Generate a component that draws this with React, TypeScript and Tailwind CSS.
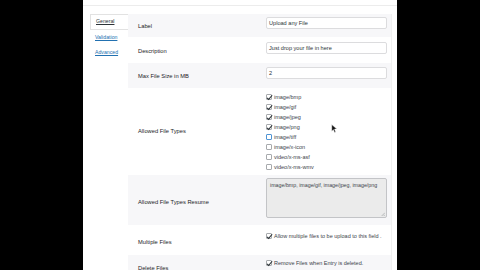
import React from 'react';

const Check = ({ checked, focus }: { checked?: boolean; focus?: boolean }) => (
  <span
    className={`flex h-[6px] w-[6px] shrink-0 items-center justify-center rounded-[1px] border bg-white ${
      focus ? 'border-[#4f94d4]' : 'border-[#a7aaad]'
    }`}
  >
    {checked && (
      <svg viewBox="0 0 10 10" className="h-[7px] w-[7px] overflow-visible">
        <path d="M1.5 5.5l2.3 2.3L8.8 1.8" fill="none" stroke="#2c3338" strokeWidth="1.5" />
      </svg>
    )}
  </span>
);

const Field = ({ value }: { value: string }) => (
  <div className="flex h-[12px] w-[121px] items-center rounded-[2px] border border-[#dcdcde] bg-white px-[2px] text-[5.6px] text-[#2c3338]">
    {value}
  </div>
);

const types: [string, boolean, boolean?][] = [
  ['image/bmp', true],
  ['image/gif', true],
  ['image/jpeg', true],
  ['image/png', true],
  ['image/tiff', false, true],
  ['image/x-icon', false],
  ['video/x-ms-asf', false],
  ['video/x-ms-wmv', false],
];

export default function App() {
  return (
    <div
      className="relative flex h-[270px] w-[480px] overflow-hidden bg-black text-[#1d2327]"
      style={{ fontFamily: '"Liberation Sans", Arial, sans-serif' }}
    >
      <div className="w-[83px] shrink-0 bg-black" />

      <div className="flex w-[314px] shrink-0 flex-col bg-white">
        <div className="h-[6px] shrink-0 border-b border-[#ececec]" />

        <div className="flex flex-1 pt-[8px]">
          {/* tabs */}
          <div className="flex w-[45px] shrink-0 flex-col pl-[7px] text-[5.2px]">
            <div className="flex h-[16px] items-center border-y border-l border-[#e2e2e2] bg-white pl-[5px] text-[#2c3338] underline">
              General
            </div>
            <div className="flex h-[15px] items-center pl-[5px] pt-[1px] text-[#2271b1] underline">Validation</div>
            <div className="flex h-[15px] items-center pl-[5px] text-[#2271b1] underline">Advanced</div>
          </div>

          {/* settings table */}
          <div className="flex w-[264px] shrink-0 flex-col border-r border-[#f0f0f0] text-[5.75px] font-medium">
            <div className="flex h-[23px] bg-[#f7f7f9]">
              <div className="flex w-[138px] items-center pl-[10px] pt-[1px]">Label</div>
              <div className="pt-[3px]">
                <Field value="Upload any File" />
              </div>
            </div>

            <div className="flex h-[26px] bg-white">
              <div className="flex w-[138px] items-center pl-[10px] pt-[2px]">Description</div>
              <div className="pt-[5px]">
                <Field value="Just drop your file in here" />
              </div>
            </div>

            <div className="flex h-[25px] bg-[#f7f7f9]">
              <div className="flex w-[138px] items-center pl-[10px] pt-[2px]">Max File Size in MB</div>
              <div className="pt-[4px]">
                <Field value="2" />
              </div>
            </div>

            <div className="flex h-[87px] bg-white">
              <div className="flex w-[138px] items-center pl-[10px]">Allowed File Types</div>
              <div className="flex flex-col pt-[4px] font-normal">
                {types.map(([t, c, f]) => (
                  <div key={t} className="flex h-[10px] items-center gap-[2px] text-[5.5px] text-[#3c434a]">
                    <Check checked={c} focus={f} />
                    <span>{t}</span>
                  </div>
                ))}
              </div>
            </div>

            <div className="flex h-[50px] bg-[#f7f7f9]">
              <div className="flex w-[138px] items-center pl-[10px] pt-[4px]">Allowed File Types Resume</div>
              <div className="pt-[3px]">
                <div className="relative h-[40px] w-[121px] rounded-[2px] border border-[#c3c4c7] bg-[#ebebeb] px-[3px] pt-[3px] text-[5.3px] font-normal text-[#3c434a]">
                  image/bmp, image/gif, image/jpeg, image/png
                  <svg viewBox="0 0 6 6" className="absolute bottom-[1px] right-[1px] h-[4px] w-[4px]">
                    <path d="M6 1L1 6M6 4L4 6" stroke="#8c8f94" strokeWidth="0.8" />
                  </svg>
                </div>
              </div>
            </div>

            <div className="flex h-[30px] bg-white">
              <div className="flex w-[138px] items-center pl-[10px] pt-[4px]">Multiple Files</div>
              <div className="pt-[6px] font-normal">
                <div className="flex h-[10px] items-center gap-[2px] text-[5.5px] text-[#3c434a]">
                  <Check checked />
                  <span>Allow multiple files to be upload to this field .</span>
                </div>
              </div>
            </div>

            <div className="flex flex-1 bg-[#f7f7f9]">
              <div className="flex w-[138px] items-start pl-[10px] pt-[9px]">Delete Files</div>
              <div className="pt-[3px] font-normal">
                <div className="flex h-[10px] items-center gap-[2px] text-[5.5px] text-[#3c434a]">
                  <Check checked />
                  <span>Remove Files when Entry is deleted.</span>
                </div>
              </div>
            </div>
          </div>

          <div className="w-[5px] shrink-0" />
        </div>
      </div>

      <div className="flex-1 bg-black" />

      {/* mouse pointer */}
      <svg viewBox="0 0 10 16" className="absolute left-[331px] top-[124px] h-[9px] w-[6px]">
        <path d="M1 1v12l3-3 2 5 2-1-2-5h4z" fill="#111" stroke="#fff" strokeWidth="0.8" />
      </svg>
    </div>
  );
}
